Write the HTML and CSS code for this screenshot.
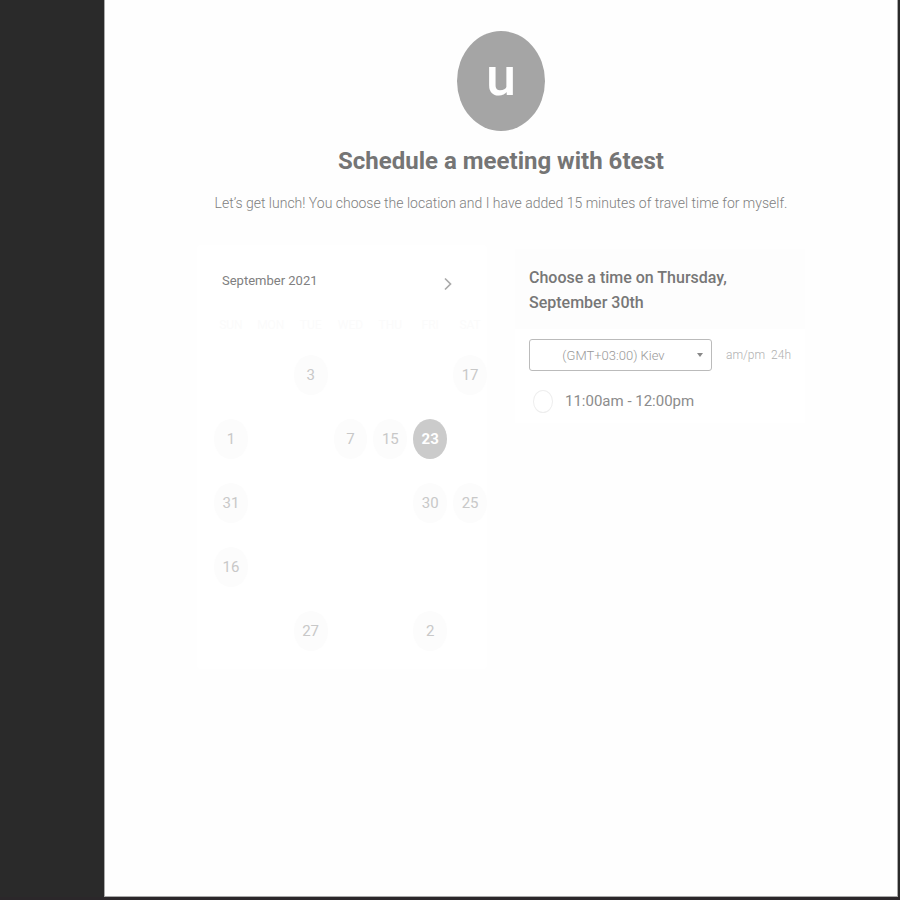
FILE: index.html
```
<!DOCTYPE html>
<html lang="en">
<head>
<meta charset="utf-8">
<meta name="viewport" content="width=device-width, initial-scale=1">
<title>Schedule a meeting</title>
<link rel="stylesheet" href="styles.css">
</head>
<body>
<main class="page">
  <header class="intro">
    <div class="avatar">u</div>
    <h1 class="title">Schedule a meeting with 6test</h1>
    <p class="summary">Let’s get lunch! You choose the location and I have added 15 minutes of travel time for myself.</p>
  </header>
  <div class="booking">
    <section class="calendar">
      <div class="month">
        <h2 class="month-name">September 2021</h2>
        <button class="next" type="button" aria-label="Next month">
          <svg viewBox="0 0 8 14" width="8" height="14"><path d="M1 1.5 6.5 7 1 12.5" fill="none" stroke="currentColor" stroke-width="1.7"/></svg>
        </button>
      </div>
      <div class="weekdays"><span>SUN</span><span>MON</span><span>TUE</span><span>WED</span><span>THU</span><span>FRI</span><span>SAT</span></div>
      <div class="days">
        <button type="button" class="day col-3">3</button>
        <button type="button" class="day col-7">17</button>
        <button type="button" class="day col-1">1</button>
        <button type="button" class="day col-4">7</button>
        <button type="button" class="day col-5">15</button>
        <button type="button" class="day col-6 selected">23</button>
        <button type="button" class="day col-1">31</button>
        <button type="button" class="day col-6">30</button>
        <button type="button" class="day col-7">25</button>
        <button type="button" class="day col-1">16</button>
        <button type="button" class="day col-3 last-row">27</button>
        <button type="button" class="day col-6 last-row">2</button>
      </div>
    </section>
    <section class="times">
      <h2 class="times-title">Choose a time on Thursday, September 30th</h2>
      <div class="options">
        <div class="zone-row">
          <div class="zone">
            <select class="zone-select" aria-label="Time zone"><option>(GMT+03:00) Kiev</option></select>
            <svg class="caret" viewBox="0 0 6 4" width="6" height="4"><path d="M0 0h6L3 4z" fill="currentColor"/></svg>
          </div>
          <div class="formats"><button type="button" class="format">am/pm</button><button type="button" class="format">24h</button></div>
        </div>
        <label class="slot"><input class="slot-radio" type="radio" name="slot">11:00am - 12:00pm</label>
      </div>
    </section>
  </div>
</main>
</body>
</html>
```
FILE: styles.css
```
* {
  box-sizing: border-box;
}

body {
  margin: 0;
  background: #2a2a2a;
  border-bottom: 3px solid #2b272a;
  font-family: Roboto, "Liberation Sans", sans-serif;
  color: #777;
}

button,
select {
  font: inherit;
  color: inherit;
  background: none;
  border: 0;
  padding: 0;
}

h1,
h2,
p {
  margin: 0;
}

.page {
  margin: 0 2px 0 104px;
  min-height: calc(100vh - 3px);
  padding: 31px 24px;
  background: #fefefe;
  border: solid #aaa;
  border-width: 0 1px 1px;
}

.intro {
  display: flex;
  flex-direction: column;
  align-items: center;
  text-align: center;
}

.avatar {
  width: 88px;
  height: 100px;
  border-radius: 50%;
  background: #a5a5a5;
  color: #fff;
  font-size: 54px;
  font-weight: 500;
  line-height: 92px;
}

.title {
  margin-top: 16px;
  font-size: 24px;
  line-height: 28px;
  font-weight: 700;
  color: #757575;
}

.summary {
  margin-top: 16px;
  font-size: 14px;
  line-height: 24px;
  font-weight: 300;
  color: #808080;
}

.booking {
  display: grid;
  grid-template-columns: 1fr 1fr;
  gap: 28px;
  align-items: start;
  max-width: 608px;
  margin: 30px auto 0;
}

.calendar {
  padding: 24px 0 18px 17px;
  background: #fff;
  border-radius: 4px;
}

.month {
  display: flex;
  align-items: center;
  justify-content: space-between;
  padding: 0 32px 0 8px;
}

.month-name {
  font-size: 13px;
  line-height: 24px;
  font-weight: 400;
  color: #808080;
}

.next {
  display: flex;
  padding: 6px 3px 0;
  color: #aaa;
}

.weekdays,
.days {
  display: grid;
  grid-template-columns: repeat(7, 1fr);
  column-gap: 6px;
}

.weekdays {
  margin-top: 24px;
  font-size: 12px;
  line-height: 16px;
  text-align: center;
  color: #fbfbfb;
}

.days {
  grid-auto-rows: 40px;
  row-gap: 24px;
  margin-top: 22px;
}

.day {
  border-radius: 50%;
  background: #fcfcfc;
  color: #c8c8c8;
  font-size: 15px;
}

.selected {
  background: #cbcbcb;
  color: #fff;
  font-weight: 700;
}

.col-1 { grid-column: 1; }
.col-3 { grid-column: 3; }
.col-4 { grid-column: 4; }
.col-5 { grid-column: 5; }
.col-6 { grid-column: 6; }
.col-7 { grid-column: 7; }
.last-row { grid-row: 5; }

.times {
  padding-top: 4px;
}

.times-title {
  padding: 16px 56px 14px 14px;
  background: #fdfdfd;
  font-size: 16px;
  line-height: 25px;
  font-weight: 500;
  color: #777;
}

.options {
  padding: 10px 14px 8px;
  background: #fff;
}

.zone-row {
  display: flex;
  align-items: center;
  gap: 14px;
}

.zone {
  position: relative;
  flex: 1;
}

.zone-select {
  display: block;
  width: 100%;
  height: 32px;
  padding: 0 34px 0 20px;
  border: 1px solid #bbb;
  border-radius: 3px;
  appearance: none;
  font-size: 13px;
  font-weight: 300;
  color: #999;
  text-align: center;
  text-align-last: center;
}

.caret {
  position: absolute;
  right: 9px;
  top: 14px;
  color: #888;
  pointer-events: none;
}

.formats {
  display: flex;
  gap: 6px;
  font-size: 12px;
  font-weight: 300;
  color: #b0b0b0;
}

.slot {
  display: flex;
  align-items: center;
  gap: 12px;
  margin-top: 16px;
  padding-left: 4px;
  font-size: 15px;
  line-height: 28px;
  color: #8c8c8c;
}

.slot-radio {
  width: 20px;
  height: 23px;
  margin: 0;
  appearance: none;
  border: 1px solid #eee;
  border-radius: 50%;
}

@media (max-width: 640px) {
  .page {
    margin-left: 2px;
  }

  .booking {
    grid-template-columns: 1fr;
  }
}
```
